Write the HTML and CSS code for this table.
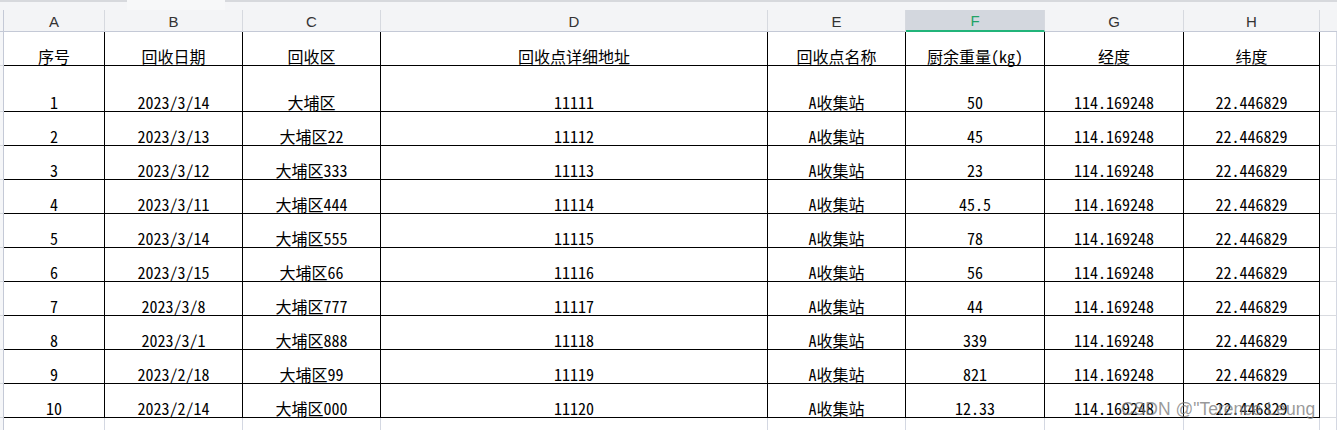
FILE: index.html
```html
<!DOCTYPE html>
<html lang="zh-CN">
<head>
<meta charset="utf-8">
<title>Sheet</title>
<link rel="stylesheet" href="styles.css">
</head>
<body>
<div class="sheet">
  <div class="topstrip">
    <span class="seg seg-left"></span><span class="seg seg-tab"></span><span class="seg seg-right"></span>
  </div>
  <div class="grid">
    <div class="rh corner"></div>
    <div class="ch">A</div><div class="ch">B</div><div class="ch">C</div><div class="ch">D</div>
    <div class="ch">E</div><div class="ch sel">F</div><div class="ch">G</div><div class="ch">H</div>
    <div class="ch last"></div>

    <div class="rh"></div>
    <div class="c">序号</div><div class="c">回收日期</div><div class="c">回收区</div><div class="c">回收点详细地址</div>
    <div class="c">回收点名称</div><div class="c">厨余重量(kg)</div><div class="c">经度</div><div class="c">纬度</div>
    <div class="e"></div>

    <div class="rh"></div>
    <div class="c">1</div><div class="c">2023/3/14</div><div class="c">大埔区</div><div class="c">11111</div>
    <div class="c">A收集站</div><div class="c">50</div><div class="c">114.169248</div><div class="c">22.446829</div>
    <div class="e"></div>

    <div class="rh"></div>
    <div class="c">2</div><div class="c">2023/3/13</div><div class="c">大埔区22</div><div class="c">11112</div>
    <div class="c">A收集站</div><div class="c">45</div><div class="c">114.169248</div><div class="c">22.446829</div>
    <div class="e"></div>

    <div class="rh"></div>
    <div class="c">3</div><div class="c">2023/3/12</div><div class="c">大埔区333</div><div class="c">11113</div>
    <div class="c">A收集站</div><div class="c">23</div><div class="c">114.169248</div><div class="c">22.446829</div>
    <div class="e"></div>

    <div class="rh"></div>
    <div class="c">4</div><div class="c">2023/3/11</div><div class="c">大埔区444</div><div class="c">11114</div>
    <div class="c">A收集站</div><div class="c">45.5</div><div class="c">114.169248</div><div class="c">22.446829</div>
    <div class="e"></div>

    <div class="rh"></div>
    <div class="c">5</div><div class="c">2023/3/14</div><div class="c">大埔区555</div><div class="c">11115</div>
    <div class="c">A收集站</div><div class="c">78</div><div class="c">114.169248</div><div class="c">22.446829</div>
    <div class="e"></div>

    <div class="rh"></div>
    <div class="c">6</div><div class="c">2023/3/15</div><div class="c">大埔区66</div><div class="c">11116</div>
    <div class="c">A收集站</div><div class="c">56</div><div class="c">114.169248</div><div class="c">22.446829</div>
    <div class="e"></div>

    <div class="rh"></div>
    <div class="c">7</div><div class="c">2023/3/8</div><div class="c">大埔区777</div><div class="c">11117</div>
    <div class="c">A收集站</div><div class="c">44</div><div class="c">114.169248</div><div class="c">22.446829</div>
    <div class="e"></div>

    <div class="rh"></div>
    <div class="c">8</div><div class="c">2023/3/1</div><div class="c">大埔区888</div><div class="c">11118</div>
    <div class="c">A收集站</div><div class="c">339</div><div class="c">114.169248</div><div class="c">22.446829</div>
    <div class="e"></div>

    <div class="rh"></div>
    <div class="c">9</div><div class="c">2023/2/18</div><div class="c">大埔区99</div><div class="c">11119</div>
    <div class="c">A收集站</div><div class="c">821</div><div class="c">114.169248</div><div class="c">22.446829</div>
    <div class="e"></div>

    <div class="rh"></div>
    <div class="c">10</div><div class="c">2023/2/14</div><div class="c">大埔区000</div><div class="c">11120</div>
    <div class="c">A收集站</div><div class="c">12.33</div><div class="c">114.169248</div><div class="c">22.446829</div>
    <div class="e"></div>

    <div class="rh"></div>
    <div class="e"></div><div class="e"></div><div class="e"></div><div class="e"></div>
    <div class="e"></div><div class="e"></div><div class="e"></div><div class="e"></div>
    <div class="e"></div>
  </div>
  <div class="watermark">CSDN @"Terence Leung</div>
</div>
</body>
</html>
```

FILE: styles.css
```css
html, body {
  margin: 0;
  padding: 0;
  background: #ffffff;
}

.sheet {
  position: relative;
  width: 1337px;
  height: 430px;
  overflow: hidden;
  background: #ffffff;
}

.topstrip {
  display: flex;
  height: 10px;
  background: #f4f5f7;
}

.seg {
  display: block;
  height: 10px;
  box-sizing: border-box;
}

.seg-left {
  width: 127px;
  border-top: 2px solid #d7d9dd;
}

.seg-tab {
  width: 98px;
  background: #f7f8f9;
}

.seg-right {
  flex: 1;
  border-top: 2px solid #d7d9dd;
}

.grid {
  display: grid;
  grid-template-columns: 4px 101px 138px 138px 387px 138px 139px 139px 136px 17px;
  grid-template-rows: 22px 34px 46px repeat(9, 34px) 34px;
  font-family: "Noto Sans Mono CJK SC", "Noto Sans CJK SC", sans-serif;
  font-feature-settings: "hwid" 1;
  font-size: 16px;
  font-weight: 300;
  color: #000;
}

.grid > div {
  box-sizing: border-box;
  min-width: 0;
  white-space: nowrap;
}

.ch {
  display: flex;
  align-items: center;
  justify-content: center;
  background: #f3f4f6;
  border-right: 1px solid #d6d9df;
  border-bottom: 1px solid #c4c9d6;
  font-family: "Liberation Sans", Arial, sans-serif;
  font-weight: 400;
  font-size: 15px;
  color: #333333;
  padding-top: 1px;
}

.ch.sel {
  background: #d3d7de;
  color: #21a366;
  border-bottom: 2px solid #21b47a;
}

.ch.last {
  border-right: none;
}

.rh {
  background: #f5f6f8;
  border-right: 1px solid #c4c9d6;
  border-bottom: 1px solid #d6d9df;
}

.rh.corner {
  background: #f3f4f6;
  border-bottom: 1px solid #c4c9d6;
}

.c {
  display: flex;
  align-items: flex-end;
  justify-content: center;
  line-height: 18px;
  padding-bottom: 0;
  border-right: 1px solid #000;
  border-bottom: 1px solid #000;
}

.e {
  border-right: 1px solid #d4d8e2;
  border-bottom: 1px solid #d9dbe0;
}

.watermark {
  position: absolute;
  left: 1121px;
  top: 401px;
  font-family: "Liberation Sans", Arial, sans-serif;
  font-size: 17.5px;
  line-height: 17px;
  color: rgba(120, 120, 120, 0.75);
  white-space: nowrap;
}
```
